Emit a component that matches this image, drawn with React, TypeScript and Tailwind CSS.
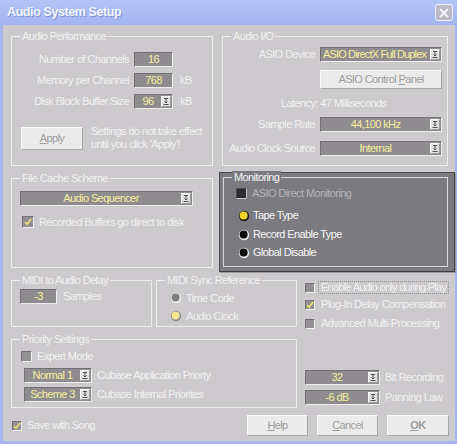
import React from "react";

const BG = "bg-[#cccacc]";

function GroupBox({
  label,
  className = "",
  children,
  dark = false,
}: {
  label: string;
  className?: string;
  children?: React.ReactNode;
  dark?: boolean;
}) {
  return (
    <div
      className={`relative border ${dark ? "border-[#d8d8d8]" : "border-[#ececec]"} ${className}`}
    >
      <span
        className={`absolute -top-[7px] left-[8px] px-[2px] leading-[13px] whitespace-nowrap ${
          dark ? "bg-[#7b7b7f] text-[#f4f4f4]" : "bg-[#cccacc]"
        }`}
      >
        {label}
      </span>
      {children}
    </div>
  );
}

function Arrow() {
  return (
    <div className="w-[10px] h-[11px] mr-[1px] shrink-0 bg-[#e2e2e2] border border-t-[#f8f8f8] border-l-[#f8f8f8] border-b-[#9a9a9a] border-r-[#9a9a9a] flex items-center justify-center">
      <svg width="6" height="7" viewBox="0 0 6 7">
        <path d="M1 0.5h4M3 0.5v4.5M1.5 3.5L3 5L4.5 3.5M0.5 6.5h5" stroke="#505050" strokeWidth="1" fill="none" />
      </svg>
    </div>
  );
}

function Field({
  value,
  className = "",
  arrow = false,
  left = false,
  textClass = "",
}: {
  value: string;
  className?: string;
  arrow?: boolean;
  left?: boolean;
  textClass?: string;
}) {
  return (
    <div
      className={`flex items-center h-[15px] shrink-0 bg-[#8e8c8e] border border-t-[#727072] border-l-[#727072] border-b-[#eeeeee] border-r-[#eeeeee] text-[#f7efa0] overflow-hidden ${className}`}
    >
      <span className={`flex-1 whitespace-nowrap ${left ? "text-left pl-[2px]" : "text-center"} ${textClass}`}>
        {value}
      </span>
      {arrow && <Arrow />}
    </div>
  );
}

function Button({ children, className = "" }: { children: React.ReactNode; className?: string }) {
  return (
    <div
      className={`flex items-center justify-center shrink-0 bg-[#ebebeb] border border-t-[#f8f8f8] border-l-[#f8f8f8] border-r-[#a6a6a6] border-b-[#a6a6a6] text-[#9c9c9c] ${className}`}
    >
      {children}
    </div>
  );
}

function Check({ checked = false, className = "" }: { checked?: boolean; className?: string }) {
  return (
    <div
      className={`shrink-0 flex items-center justify-center bg-[#929092] border border-t-[#747274] border-l-[#747274] border-b-[#f0f0f0] border-r-[#f0f0f0] ${className}`}
    >
      {checked && (
        <svg width="8" height="8" viewBox="0 0 8 8">
          <path d="M1 4l2 2.2L7 1" stroke="#f3e27a" strokeWidth="1.6" fill="none" />
        </svg>
      )}
    </div>
  );
}

function Radio({ fill, ring, className = "" }: { fill: string; ring: string; className?: string }) {
  return (
    <svg width="12" height="12" viewBox="0 0 12 12" className={`shrink-0 ${className}`}>
      <circle cx="6" cy="6" r="5.2" fill={ring} />
      <circle cx="5.6" cy="5.6" r="4" fill={fill} />
    </svg>
  );
}

export default function App() {
  return (
    <div className="w-[457px] h-[444px] bg-[#a3b6f1] flex flex-col font-['Liberation_Sans',Arial,sans-serif] text-[11px] tracking-[-0.6px] leading-none text-[#f1f1f1] overflow-hidden">
      {/* Title bar */}
      <div className="h-[25px] flex items-center justify-between pl-[7px] pr-[4px] bg-gradient-to-b from-[#b2c3f7] to-[#a2b5f0]">
        <span className="font-bold text-[12.5px] tracking-[-0.4px] text-[#f2f5ff] [text-shadow:1px_1px_0_#8496d4]">
          Audio System Setup
        </span>
        <div className="w-[18px] h-[17px] rounded-[3px] bg-[#b9bac6] border border-[#eef0ff] flex items-center justify-center">
          <svg width="10" height="10" viewBox="0 0 10 10">
            <path d="M1 1L9 9M9 1L1 9" stroke="#f6f6fa" strokeWidth="2" />
          </svg>
        </div>
      </div>

      {/* Body */}
      <div className={`ml-[3px] mr-[2px] h-[416px] ${BG} flex flex-col`}>
        {/* Row 1 */}
        <div className="flex mt-[11px] ml-[8px] gap-[9px]">
          <GroupBox label="Audio Performance" className="w-[202px] h-[130px]">
            <div className="flex flex-col pt-[15px] gap-[6px]">
              <div className="flex items-center h-[15px]">
                <span className="w-[117px] text-right whitespace-nowrap">Number of Channels</span>
                <Field value="16" className="ml-[5px] w-[39px]" />
              </div>
              <div className="flex items-center h-[15px]">
                <span className="w-[117px] text-right whitespace-nowrap">Memory per Channel</span>
                <Field value="768" className="ml-[5px] w-[39px]" />
                <span className="ml-[7px]">kB</span>
              </div>
              <div className="flex items-center h-[15px]">
                <span className="w-[117px] text-right whitespace-nowrap">Disk Block Buffer Size</span>
                <Field value="96" arrow className="ml-[5px] w-[39px]" />
                <span className="ml-[7px]">kB</span>
              </div>
            </div>
            <div className="flex items-center mt-[16px] ml-[9px]">
              <Button className="w-[62px] h-[23px]">
                <span>
                  <span className="underline">A</span>pply
                </span>
              </Button>
              <div className="ml-[8px] leading-[13px] whitespace-nowrap">
                <div>Settings do not take effect</div>
                <div>until you click 'Apply'!</div>
              </div>
            </div>
          </GroupBox>

          <GroupBox label="Audio I/O" className="w-[226px] h-[130px]">
            <div className="flex flex-col pt-[10px]">
              <div className="flex items-center h-[15px]">
                <span className="w-[92px] text-right whitespace-nowrap">ASIO Device</span>
                <Field
                  value="ASIO DirectX Full Duplex"
                  left
                  arrow
                  textClass="tracking-[-0.85px]"
                  className="ml-[5px] w-[122px]"
                />
              </div>
              <Button className="mt-[8px] ml-[97px] w-[122px] h-[19px]">
                <span>
                  ASIO Control <span className="underline">P</span>anel
                </span>
              </Button>
              <div className="mt-[7px] h-[14px] pl-[58px] flex items-center whitespace-nowrap">
                Latency: 47 Milliseconds
              </div>
              <div className="flex items-center h-[15px] mt-[7px]">
                <span className="w-[92px] text-right whitespace-nowrap">Sample Rate</span>
                <Field value="44,100 kHz" arrow className="ml-[5px] w-[122px]" />
              </div>
              <div className="flex items-center h-[15px] mt-[9px]">
                <span className="w-[92px] text-right whitespace-nowrap">Audio Clock Source</span>
                <Field value="Internal" arrow className="ml-[5px] w-[122px]" />
              </div>
            </div>
          </GroupBox>
        </div>

        {/* Row 2 */}
        <div className="flex mt-[6px] ml-[8px] items-start">
          <GroupBox label="File Cache Scheme" className="mt-[6px] w-[202px] h-[90px]">
            <div className="flex flex-col pl-[8px] pt-[12px]">
              <Field value="Audio Sequencer" arrow className="w-[173px]" />
              <div className="flex items-center mt-[10px] ml-[2px] gap-[5px]">
                <Check checked className="w-[12px] h-[12px]" />
                <span className="whitespace-nowrap">Recorded Buffers go direct to disk</span>
              </div>
            </div>
          </GroupBox>

          <div className="ml-[6px] w-[236px] h-[100px] bg-[#7b7b7f] border border-[#4a4a4c] border-b-[#3e3e40] border-r-[#3e3e40] pl-[3px] pt-[4px] shadow-[1px_1px_0_#9a9a9c]">
            <GroupBox label="Monitoring" dark className="w-[225px] h-[90px]">
              <div className="flex flex-col pl-[12px] pt-[10px]">
                <div className="flex items-center h-[11px] gap-[5px]">
                  <div className="w-[11px] h-[11px] bg-[#2e2e30] border border-t-[#4a4a4a] border-l-[#4a4a4a] border-b-[#c8c8c8] border-r-[#c8c8c8]" />
                  <span className="text-[#b4b4b6] whitespace-nowrap">ASIO Direct Monitoring</span>
                </div>
                <div className="flex items-center h-[11px] mt-[11px] ml-[2px] gap-[3px]">
                  <Radio fill="#f4d22c" ring="#1a1a1a" />
                  <span className="whitespace-nowrap text-[#f6f6f6]">Tape Type</span>
                </div>
                <div className="flex items-center h-[11px] mt-[8px] ml-[2px] gap-[3px]">
                  <Radio fill="#0a0a0a" ring="#e8e8e8" />
                  <span className="whitespace-nowrap text-[#f6f6f6]">Record Enable Type</span>
                </div>
                <div className="flex items-center h-[11px] mt-[7px] ml-[2px] gap-[3px]">
                  <Radio fill="#0a0a0a" ring="#e8e8e8" />
                  <span className="whitespace-nowrap text-[#f6f6f6]">Global Disable</span>
                </div>
              </div>
            </GroupBox>
          </div>
        </div>

        {/* Row 3 */}
        <div className="flex mt-[8px] ml-[8px] items-start">
          <GroupBox label="MIDI to Audio Delay" className="w-[141px] h-[47px]">
            <div className="flex items-center pl-[8px] pt-[8px]">
              <Field value="-3" className="w-[37px]" />
              <span className="ml-[6px]">Samples</span>
            </div>
          </GroupBox>
          <GroupBox label="MIDI Sync Reference" className="ml-[4px] w-[141px] h-[47px]">
            <div className="flex flex-col pl-[13px] pt-[11px]">
              <div className="flex items-center h-[12px] gap-[4px]">
                <Radio fill="#7e7c7e" ring="#eeeeee" />
                <span className="whitespace-nowrap">Time Code</span>
              </div>
              <div className="flex items-center h-[12px] mt-[6px] gap-[4px]">
                <Radio fill="#f6e592" ring="#8a8a8a" />
                <span className="whitespace-nowrap">Audio Clock</span>
              </div>
            </div>
          </GroupBox>
          <div className="ml-[8px] pt-[2px] flex flex-col">
            <div className="flex items-center h-[11px] gap-[4px]">
              <Check className="w-[10px] h-[10px]" />
              <span className="whitespace-nowrap outline outline-1 outline-dotted outline-[#8e8e8e] px-[2px] leading-[11px] tracking-[-0.72px]">
                Enable Audio only during Play
              </span>
            </div>
            <div className="flex items-center h-[11px] mt-[6px] gap-[6px]">
              <Check checked className="w-[10px] h-[10px]" />
              <span className="whitespace-nowrap">Plug-In Delay Compensation</span>
            </div>
            <div className="flex items-center h-[11px] mt-[8px] gap-[6px]">
              <Check className="w-[10px] h-[10px]" />
              <span className="whitespace-nowrap">Advanced Multi-Processing</span>
            </div>
          </div>
        </div>

        {/* Row 4 */}
        <div className="flex mt-[10px] ml-[8px] items-start">
          <GroupBox label="Priority Settings" className="w-[286px] h-[69px]">
            <div className="flex flex-col pl-[9px] pt-[11px]">
              <div className="flex items-center h-[11px] gap-[5px]">
                <Check className="w-[11px] h-[11px]" />
                <span className="whitespace-nowrap">Expert Mode</span>
              </div>
              <div className="flex items-center mt-[6px] ml-[3px]">
                <Field value="Normal 1" arrow className="w-[68px]" />
                <span className="ml-[5px] whitespace-nowrap">Cubase Application Priorty</span>
              </div>
              <div className="flex items-center mt-[4px] ml-[3px]">
                <Field value="Scheme 3" arrow className="w-[68px]" />
                <span className="ml-[5px] whitespace-nowrap">Cubase Internal Priorites</span>
              </div>
            </div>
          </GroupBox>
          <div className="ml-[8px] pt-[31px] flex flex-col gap-[5px]">
            <div className="flex items-center">
              <Field value="32" arrow className="w-[75px]" />
              <span className="ml-[5px] whitespace-nowrap">Bit Recording</span>
            </div>
            <div className="flex items-center">
              <Field value="-6 dB" arrow className="w-[75px]" />
              <span className="ml-[5px] whitespace-nowrap">Panning Law</span>
            </div>
          </div>
        </div>

        {/* Row 5 */}
        <div className="flex mt-[7px] items-start">
          <div className="flex items-center ml-[9px] mt-[5px] gap-[5px]">
            <Check checked className="w-[10px] h-[10px]" />
            <span className="whitespace-nowrap">Save with Song</span>
          </div>
          <div className="ml-auto mr-[6px] flex gap-[9px]">
            <Button className="w-[61px] h-[21px]">
              <span>
                <span className="underline">H</span>elp
              </span>
            </Button>
            <Button className="w-[61px] h-[21px]">
              <span>
                <span className="underline">C</span>ancel
              </span>
            </Button>
            <Button className="w-[62px] h-[21px] text-[#8a8a8a] font-bold">
              <span>
                <span className="underline">O</span>K
              </span>
            </Button>
          </div>
        </div>
      </div>
    </div>
  );
}
